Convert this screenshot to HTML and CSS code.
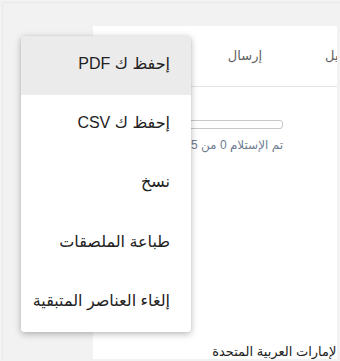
FILE: index.html
```html
<!DOCTYPE html>
<html lang="ar">
<head>
<meta charset="utf-8">
<link rel="stylesheet" href="styles.css">
</head>
<body>
<div class="frame">
  <div class="card">
    <div class="tabs" dir="rtl">
      <div class="tab">تفاصيل</div>
      <div class="tab">إرسال</div>
    </div>
    <div class="status" dir="rtl">
      <div class="bar"></div>
      <div class="received">تم الإستلام 0 من 5</div>
    </div>
    <div class="country" dir="rtl">الإمارات العربية المتحدة</div>
  </div>
</div>
<ul class="menu" dir="rtl">
  <li class="item active">إحفظ ك PDF</li>
  <li class="item">إحفظ ك CSV</li>
  <li class="item">نسخ</li>
  <li class="item">طباعة الملصقات</li>
  <li class="item">إلغاء العناصر المتبقية</li>
</ul>
</body>
</html>
```
FILE: styles.css
```css
html, body {
  margin: 0;
  padding: 0;
  background: #f2f2f2;
  font-family: "Liberation Sans", "DejaVu Sans", Arial, sans-serif;
  width: 340px;
  height: 361px;
  overflow: hidden;
}
.frame {
  margin: 2px 0 0 2px;
  border-top: 1px solid #e9e9e9;
  border-left: 1px solid #e9e9e9;
  height: 358px;
  padding: 23px 0 0 90px;
  box-sizing: border-box;
}
.card {
  width: 244px;
  height: 333px;
  background: #fff;
  overflow: hidden;
  display: flex;
  flex-direction: column;
}
.tabs {
  display: flex;
  height: 60px;
  border-bottom: 1px solid #e3e3e3;
  margin-right: -57px;
  flex: none;
}
.tab {
  padding: 0 33px;
  font-size: 13px;
  color: #5f5f5f;
  line-height: 60px;
  white-space: nowrap;
}
.tab:first-child {
  padding-right: 30px;
  padding-left: 30px;
}
.status {
  padding: 33px 54px 0 0;
  flex: 1;
}
.bar {
  height: 7px;
  border: 1px solid #c8c8c8;
  border-radius: 3px;
  margin-left: 6px;
}
.received {
  margin-top: 9px;
  font-size: 12px;
  color: #6d7c90;
  white-space: nowrap;
}
.country {
  font-size: 13px;
  color: #222;
  margin-right: -3px;
  line-height: 15px;
  padding-bottom: 0;
  white-space: nowrap;
}
.menu {
  position: absolute;
  left: 21px;
  top: 36px;
  width: 170px;
  margin: 0;
  padding: 0;
  list-style: none;
  background: #fff;
  border-radius: 3px;
  box-shadow: 0 2px 7px rgba(0,0,0,0.28), 0 0 2px rgba(0,0,0,0.08);
  overflow: hidden;
}
.item {
  height: 59.2px;
  line-height: 55px;
  padding: 0 21px 0 8px;
  font-size: 16px;
  color: #222;
  white-space: nowrap;
}
.item.active {
  background: #ebebeb;
}
```
